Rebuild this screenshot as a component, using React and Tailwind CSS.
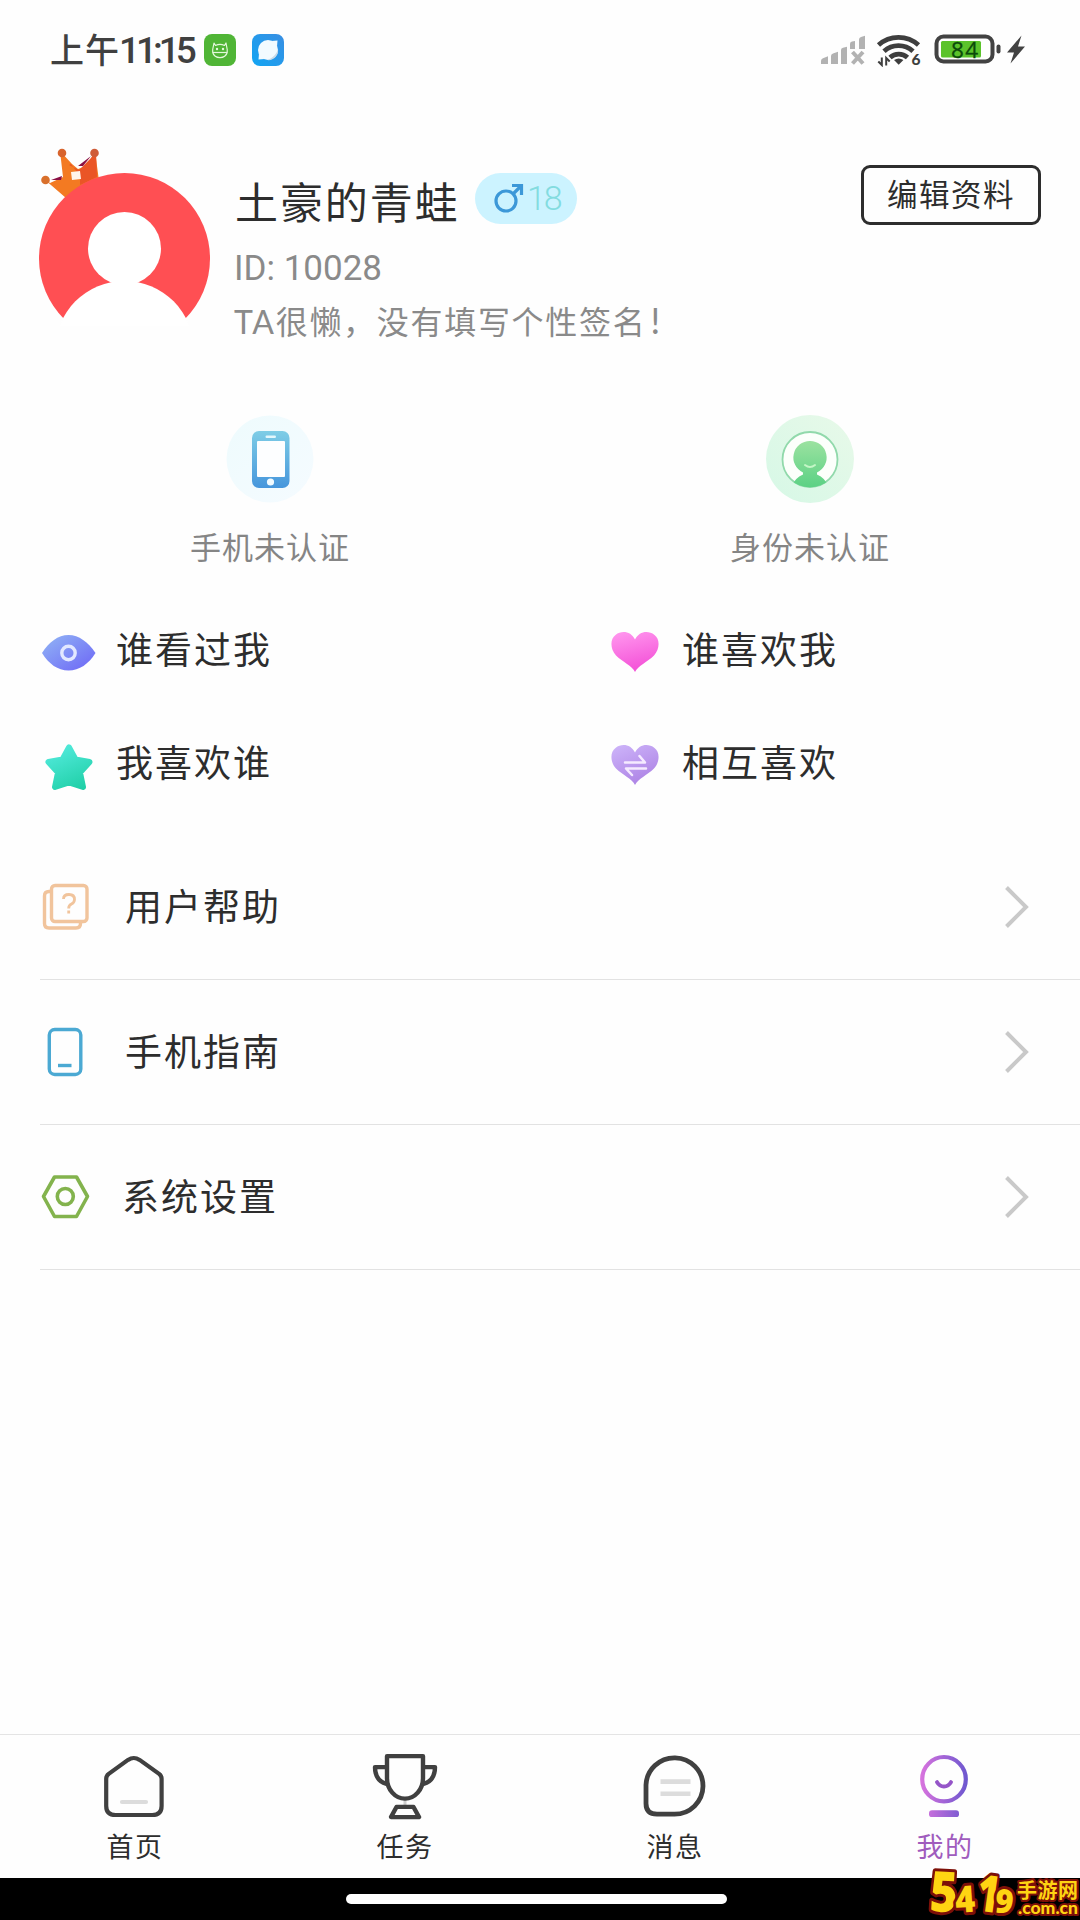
import React from "react";

const CJK = "font-['Noto_Sans_CJK_SC',sans-serif]";

function StatusBar() {
  return (
    <header className="flex h-[98px] items-center justify-between pl-[50px] pr-[51px]">
      <div className="flex items-center">
        <div className="flex w-[154px] items-center whitespace-nowrap font-medium text-[#404040]">
          <span className="text-[34px] leading-[40px] tracking-[1px]">上午</span>
          <span className="-ml-[1px] mt-[3px] font-['Roboto',sans-serif] text-[37px] leading-[40px] tracking-[-4px]">11:15</span>
        </div>
        <svg className="mt-[2px] h-8 w-8" viewBox="0 0 32 32">
          <rect width="32" height="32" rx="8" fill="#50b536" />
          <g fill="none" stroke="#e4f7dc" strokeWidth="1.2" strokeLinejoin="round">
            <path d="M10 9l1.5 2.5c2.5-1.2 6.500-1.200 9 0L22 9l1.200 6.500v3a7.500 6.800 0 0 1-14.500 0v-3z" />
            <path d="M9 18.500h14" />
          </g>
          <circle cx="13" cy="15" r="1.200" fill="#e4f7dc" />
          <circle cx="19" cy="15" r="1.200" fill="#e4f7dc" />
        </svg>
        <svg className="ml-4 mt-[2px] h-8 w-8" viewBox="0 0 32 32">
          <defs>
            <linearGradient id="planetBg" x1="0" y1="1" x2="1" y2="0">
              <stop offset="0" stopColor="#12a5f3" />
              <stop offset="1" stopColor="#398ee2" />
            </linearGradient>
          </defs>
          <rect width="32" height="32" rx="8" fill="url(#planetBg)" />
          <circle cx="16" cy="16" r="10" fill="#f2fbff" />
          <path d="M25.500 6.500l-.5 6-5.500-5.500zM6.500 25.500l.5-6 5.500 5.500z" fill="#f2fbff" />
          <path d="M26 15c-1.500 5.500-5 9-11 11 6 1 12-4 11-11z" fill="#c9dbe8" />
        </svg>
      </div>
      <div className="flex items-center">
        <svg className="h-[34px] w-[50px]" viewBox="818 32 50 34" fill="#b2b2b2">
          <path d="M821 64v-3q0-2 2-2.700l5-2V64zM831 64V56q0-2 2-2.600l5-1.600V64zM841 64V50q0-2 2-2.300l4-1V64zM850 49v-5q0-2 2-2.400l3-.6v8zM859 49V39.500q0-2 2-2.500l4-1.200V49z" />
          <path d="M852.500 52l10.500 11.500M863 52l-10.500 11.500" stroke="#b2b2b2" strokeWidth="4" />
        </svg>
        <svg className="ml-2 h-[36px] w-[48px]" viewBox="876 31.500 48 36">
          <g fill="none" stroke="#3e3e3e" strokeWidth="4.800">
            <path d="M878.500 45.500a30 30 0 0 1 40 0" />
            <path d="M884 51.800a21.500 21.500 0 0 1 29 0" />
            <path d="M890 58a13 13 0 0 1 17.500 0" />
          </g>
          <path d="M894 60.500q4.700-3 9.400 0l-4.700 4.700z" fill="#3e3e3e" />
          <path d="M881.800 58v7.500l-3.500-3.500M886.200 66v-7.500l3.500 3.500" fill="none" stroke="#3e3e3e" strokeWidth="2" />
          <text x="911.500" y="65.700" fontFamily="Lato" fontWeight="900" fontSize="15.500" fill="#3e3e3e">6</text>
        </svg>
        <svg className="ml-[9px] h-[34px] w-[96px]" viewBox="933 32.500 96 34">
          <rect x="936.500" y="37" width="56" height="25" rx="7" fill="#fff" stroke="#424242" strokeWidth="4" />
          <rect x="941" y="41.500" width="40" height="16.500" rx="1.500" fill="#5bc32b" />
          <text x="951" y="58" fontFamily="Open Sans" fontSize="22.500" fill="#0b4a0a" stroke="#0b4a0a" strokeWidth="0.300" textLength="27">84</text>
          <rect x="996.500" y="45" width="4" height="9" rx="2" fill="#424242" />
          <path d="M1021.500 36L1007 53h7l-3.500 11L1025 47h-7z" fill="#424242" />
        </svg>
      </div>
    </header>
  );
}

function Avatar() {
  return (
    <svg className="h-[182px] w-[180px] shrink-0" viewBox="36 144 180 182">
      <path d="M44 179l6 4 13-6-3-26 12 13 6 5 9-3 8-15 4 30-18 9-15 8z" fill="#f37a22" />
      <path d="M69 165l10 5 12-12 5-6 1 25-17 8v-9l-9-12z" fill="#ea5526" />
      <path d="M78 166l13-10-8 10zM51 180l11-4-1 4z" fill="#8b1044" />
      <path d="M71 172l9-1 1 8-9 1z" fill="#fff4ea" />
      <circle cx="45.500" cy="180" r="4.300" fill="#d9702b" />
      <circle cx="62" cy="153" r="4.300" fill="#d8642d" />
      <circle cx="94.500" cy="153" r="4.300" fill="#cf5b37" />
      <circle cx="124.500" cy="258.500" r="85.500" fill="#ff4f53" />
      <circle cx="124.500" cy="248.500" r="36.500" fill="#fff" />
      <circle cx="124.500" cy="350.500" r="69.500" fill="#fff" />
    </svg>
  );
}

function Profile() {
  return (
    <section className="flex h-[302px] items-start pl-9 pr-[39px] pt-[46px]">
      <Avatar />
      <div className="ml-[18px] flex flex-1 flex-col pt-[29px]">
        <div className="flex h-[52px] items-center">
          <h1 className="mt-[2px] w-[241px] whitespace-nowrap pl-[1px] text-[43px] leading-[60px] tracking-[1.900px] text-[#2d2d2d]">土豪的青蛙</h1>
          <div className="-mt-[2px] flex h-[51px] w-[102px] items-center rounded-full bg-[#ccf3ff] pl-[19px]">
            <svg className="h-[30px] w-[30px]" viewBox="0 0 30 30" fill="none" stroke="#3c98d8" strokeWidth="3.200">
              <circle cx="12" cy="18" r="10" />
              <path d="M19 11l8-8M18 2.500h9.500V12" />
            </svg>
            <span className="ml-[3px] font-['Roboto',sans-serif] text-[34px] font-light leading-[40px] tracking-[-2px] text-[#83dcdf]">18</span>
          </div>
        </div>
        <p className="mt-[21px] h-[46px] whitespace-nowrap font-['Roboto',sans-serif] text-[35px] leading-[46px] text-[#8a8a8a]">ID: 10028</p>
        <p className="mt-[5px] flex h-[46px] items-baseline whitespace-nowrap font-['Lato','Noto_Sans_CJK_SC',sans-serif] text-[32px] leading-[46px] tracking-[1.700px] text-[#8a8a8a]">
          TA很懒，没有填写个性签名<span className="ml-[4px] text-[36px]">!</span>
        </p>
      </div>
      <button className="mt-[21px] flex h-[60px] w-[180px] shrink-0 items-center justify-center whitespace-nowrap rounded-[9px] border-3 border-[#2d2d2d] pb-[4px] text-[30.500px] leading-[40px] tracking-[1.500px] text-[#2d2d2d]">编辑资料</button>
    </section>
  );
}

function PhoneBadge() {
  return (
    <svg className="h-[92px] w-[92px]" viewBox="224 413 92 92">
      <defs>
        <linearGradient id="phoneFill" x1="0" y1="0" x2="0" y2="1">
          <stop offset="0" stopColor="#7ecde6" />
          <stop offset="1" stopColor="#4696dc" />
        </linearGradient>
        <linearGradient id="phoneHalo" x1="0" y1="0" x2="1" y2="1">
          <stop offset="0" stopColor="#eefbfd" />
          <stop offset="1" stopColor="#f5fbff" />
        </linearGradient>
      </defs>
      <circle cx="270" cy="459" r="43.500" fill="url(#phoneHalo)" />
      <rect x="252" y="431" width="37.500" height="57" rx="7" fill="url(#phoneFill)" />
      <rect x="257" y="441" width="28" height="36" rx="1" fill="#fdfeff" />
      <rect x="265.500" y="435.500" width="10.500" height="2.500" rx="1.200" fill="#e3f7fc" />
      <circle cx="270.500" cy="482" r="3.600" fill="#f2fbff" />
    </svg>
  );
}

function IdentityBadge() {
  return (
    <svg className="h-[92px] w-[92px]" viewBox="763.500 413 92 92">
      <defs>
        <linearGradient id="idFill" x1="0" y1="0" x2="0" y2="1">
          <stop offset="0" stopColor="#9be2a0" />
          <stop offset="1" stopColor="#5bd184" />
        </linearGradient>
        <linearGradient id="idHalo" x1="0" y1="1" x2="1" y2="0">
          <stop offset="0" stopColor="#d6f8e6" />
          <stop offset="1" stopColor="#e8f9e9" />
        </linearGradient>
        <clipPath id="idClip"><circle cx="809.500" cy="459.500" r="28" /></clipPath>
      </defs>
      <circle cx="809.500" cy="459" r="44" fill="url(#idHalo)" />
      <circle cx="809.500" cy="459.500" r="27.500" fill="#fcfffb" stroke="#91d9ab" strokeWidth="1.800" />
      <g fill="url(#idFill)" clipPath="url(#idClip)">
        <path d="M809.500 441a16.500 16.500 0 0 1 7 31.500v2q8 3 12 13h-38q4-10 12-13v-2a16.500 16.500 0 0 1 7-31.500z" />
      </g>
      <path d="M804.500 465q5 4 10 0" fill="none" stroke="#c4f6c6" strokeWidth="2" strokeLinecap="round" />
    </svg>
  );
}

function Verifications() {
  const items = [
    { label: "手机未认证", icon: <PhoneBadge /> },
    { label: "身份未认证", icon: <IdentityBadge /> },
  ];
  return (
    <section className="grid h-[191px] grid-cols-2 pt-[13px]">
      {items.map((item) => (
        <div key={item.label} className="flex flex-col items-center">
          {item.icon}
          <span className="mt-[19px] whitespace-nowrap text-[31px] leading-[44px] tracking-[1px] text-[#858585]">{item.label}</span>
        </div>
      ))}
    </section>
  );
}

const heartPath =
  "M24 40C21 33.500 12 30.500 5 23.500C-1 17 -1 7 4.500 3C11 -2 20 -0.500 24 7.500C28 -0.500 37 -2 43.500 3C49 7 49 17 43 23.500C36 30.500 27 33.500 24 40z";

function EyeIcon() {
  return (
    <svg className="h-9 w-[54px]" viewBox="0 0 54 36">
      <defs>
        <linearGradient id="eyeFill" x1="0" y1="0" x2="1" y2="1">
          <stop offset="0.100" stopColor="#8eaef5" />
          <stop offset="0.850" stopColor="#7271f6" />
        </linearGradient>
      </defs>
      <path d="M0 18C7 7 16 0 26.500 0s19.500 7 27 18c-7 11-16 17.500-27 17.500S7 29 0 18z" fill="url(#eyeFill)" />
      <circle cx="26.500" cy="18" r="6.700" fill="none" stroke="#e2e8ff" strokeWidth="3.400" />
    </svg>
  );
}

function StarIcon() {
  return (
    <svg className="h-12 w-12" viewBox="0 0 48 48">
      <defs>
        <linearGradient id="starFill" gradientUnits="userSpaceOnUse" x1="12" y1="0" x2="34" y2="48">
          <stop offset="0" stopColor="#55ecdf" />
          <stop offset="1" stopColor="#1fcfa6" />
        </linearGradient>
      </defs>
      <path d="M24 4.500l6.500 12 14 2.500-9.500 10.500 3 14.500L24 39.500 10 44l3-14.500L3.500 19l14-2.500z" fill="url(#starFill)" stroke="url(#starFill)" strokeWidth="6" strokeLinejoin="round" />
    </svg>
  );
}

function HeartIcon() {
  return (
    <svg className="h-10 w-12" viewBox="0 0 48 40">
      <defs>
        <linearGradient id="heartFill" x1="0.300" y1="0" x2="0.600" y2="1">
          <stop offset="0" stopColor="#ff93ed" />
          <stop offset="1" stopColor="#f34ed6" />
        </linearGradient>
      </defs>
      <path d={heartPath} fill="url(#heartFill)" />
    </svg>
  );
}

function MutualIcon() {
  return (
    <svg className="h-10 w-12" viewBox="0 0 48 40">
      <defs>
        <linearGradient id="mutualFill" x1="0.200" y1="0" x2="0.700" y2="1">
          <stop offset="0" stopColor="#cbb1f8" />
          <stop offset="1" stopColor="#ac81e4" />
        </linearGradient>
      </defs>
      <path d={heartPath} fill="url(#mutualFill)" />
      <path d="M14 17.500h20L28.500 11M35 23.500H15l6 6.500" fill="none" stroke="#f5eaff" strokeWidth="2.500" strokeLinecap="round" strokeLinejoin="round" />
    </svg>
  );
}

function Relations() {
  const text = "whitespace-nowrap text-[37px] leading-[50px] tracking-[2px] text-[#2d2d2d]";
  return (
    <section className="grid h-[244px] grid-cols-[569px_1fr] grid-rows-[113px_113px] pl-[42px]">
      <div className="flex items-center">
        <div className="mt-[10px] w-[74px]"><EyeIcon /></div>
        <span className={text}>谁看过我</span>
      </div>
      <div className="flex items-center">
        <div className="mt-[9px] w-[71px]"><HeartIcon /></div>
        <span className={text}>谁喜欢我</span>
      </div>
      <div className="flex items-center">
        <div className="mt-[12px] w-[74px] pl-[3px]"><StarIcon /></div>
        <span className={text}>我喜欢谁</span>
      </div>
      <div className="flex items-center">
        <div className="mt-[9px] w-[71px]"><MutualIcon /></div>
        <span className={text}>相互喜欢</span>
      </div>
    </section>
  );
}

function HelpIcon() {
  return (
    <svg className="h-[50px] w-[50px]" viewBox="40 882 50 50" fill="none" stroke="#f1c49c" strokeWidth="3.400">
      <rect x="51.500" y="885.500" width="35.500" height="36" rx="3.500" />
      <path d="M51 891.500h-2q-4.500 0-4.500 4.500v27.500q0 4.500 4.500 4.500H76q4.500 0 4.500-4.500V922" />
      <path d="M63.500 899q0-4.500 5.500-4.500t5.500 5q0 3-3 4.500t-2.800 4.500M68.700 910.500v3" strokeWidth="2.800" />
    </svg>
  );
}

function GuideIcon() {
  return (
    <svg className="h-[50px] w-[50px]" viewBox="40 1027 50 50" fill="none" stroke="#4ba9d3" strokeWidth="3.400">
      <rect x="49.300" y="1029.500" width="31.500" height="45" rx="5.500" />
      <path d="M58 1065.500h13.500" />
    </svg>
  );
}

function SettingsIcon() {
  return (
    <svg className="h-[50px] w-[50px]" viewBox="40 1172 50 50" fill="none" stroke="#83b34d" strokeWidth="3.600" strokeLinejoin="round">
      <path d="M54.500 1177h22L87.500 1196.500l-11 20h-22L43.500 1196.500z" />
      <circle cx="65.300" cy="1196.500" r="8" />
    </svg>
  );
}

function Menu() {
  const items = [
    { label: "用户帮助", icon: <HelpIcon />, pad: "pl-[35px]" },
    { label: "手机指南", icon: <GuideIcon />, pad: "pl-[35px]" },
    { label: "系统设置", icon: <SettingsIcon />, pad: "pl-[32px]" },
  ];
  return (
    <nav className="pl-10">
      {items.map((item) => (
        <div key={item.label} className="flex h-[145px] items-center border-b-[1px] border-[#e2e2e2] pr-[50px]">
          {item.icon}
          <span className={`${item.pad} flex-1 whitespace-nowrap pb-[4px] text-[37px] leading-[50px] tracking-[2px] text-[#2d2d2d]`}>{item.label}</span>
          <svg className="h-[44px] w-[26px]" viewBox="0 0 26 44" fill="none" stroke="#c9c9c9" strokeWidth="4">
            <path d="M2.500 2.500L22 22 2.500 41.500" />
          </svg>
        </div>
      ))}
    </nav>
  );
}

const tabIconSize = "h-[68px] w-[70px]";

function HomeIcon() {
  return (
    <svg className={`${tabIconSize} -ml-[2px]`} preserveAspectRatio="none" viewBox="99 1753 70 70" fill="none" stroke="#404040" strokeWidth="4.200">
      <path d="M128 1761.200q5.800-4 11.600 0l19.500 14.300q2.500 2 2.500 5v28q0 9.300-9.300 9.300h-36.800q-9.300 0-9.300-9.300v-28q0-3 2.500-5z" strokeLinejoin="round" />
      <path d="M122 1804.500h24" stroke="#dcdcdc" strokeLinecap="round" />
    </svg>
  );
}

function TrophyIcon() {
  return (
    <svg className={`${tabIconSize} -ml-[1px]`} preserveAspectRatio="none" viewBox="369.500 1753 70 70" fill="none" stroke="#404040" strokeWidth="4.400" strokeLinejoin="round">
      <path d="M404.500 1800v8" stroke="#cfcfcf" strokeWidth="3" />
      <path d="M386.500 1757.300h36V1780a18 21 0 0 1-36 0zM386.500 1768.500H374.500q0 14 11.500 17.500M422.500 1768.500H434.500q0 14-11.500 17.500M396 1809.500h17l5.500 10.500h-28z" />
    </svg>
  );
}

function MessageIcon() {
  return (
    <svg className={`${tabIconSize} -ml-[1px]`} preserveAspectRatio="none" viewBox="639.500 1753.500 70 70" fill="none" stroke="#404040" strokeWidth="4.800">
      <path d="M645.500 1787.500a28.500 29 0 1 1 28.500 30h-17.500q-11 0-11-11z" />
      <path d="M660 1784h30M660 1796.500h30" stroke="#dcdcdc" />
    </svg>
  );
}

function MeIcon() {
  return (
    <svg className={`${tabIconSize} -ml-[2px]`} preserveAspectRatio="none" viewBox="909.500 1753 70 70" fill="none">
      <defs>
        <linearGradient id="meFill" gradientUnits="userSpaceOnUse" x1="921" y1="0" x2="968" y2="0">
          <stop offset="0" stopColor="#d973de" />
          <stop offset="1" stopColor="#6c57cf" />
        </linearGradient>
      </defs>
      <ellipse cx="944.500" cy="1781" rx="21.800" ry="22.800" stroke="url(#meFill)" strokeWidth="4.200" />
      <path d="M937.500 1784q2.500 4.500 7 4.500t7-4.500" stroke="#9555c8" strokeWidth="4" strokeLinecap="round" />
      <rect x="929.500" y="1813" width="30" height="7" rx="3" fill="url(#meFill)" />
    </svg>
  );
}

function TabBar() {
  const tabs = [
    { label: "首页", icon: <HomeIcon />, color: "text-[#2d2d2d]" },
    { label: "任务", icon: <TrophyIcon />, color: "text-[#2d2d2d]" },
    { label: "消息", icon: <MessageIcon />, color: "text-[#2d2d2d]" },
    { label: "我的", icon: <MeIcon />, color: "text-[#a05cbd]" },
  ];
  return (
    <footer className="mt-auto">
      <div className="grid h-[144px] grid-cols-4 border-t border-[#e4e4e4] pt-[17px]">
        {tabs.map((tab) => (
          <div key={tab.label} className="flex flex-col items-center">
            {tab.icon}
            <span className={`${tab.color} mt-[7px] whitespace-nowrap text-[27px] leading-[38px] tracking-[1.500px]`}>{tab.label}</span>
          </div>
        ))}
      </div>
      <div className="flex h-[42px] justify-center bg-black pt-[16px]">
        <div className="ml-[-7px] h-[10px] w-[381px] rounded-full bg-white" />
      </div>
    </footer>
  );
}

function SiteBadge() {
  return (
    <svg className="absolute bottom-0 right-0 h-[60px] w-[154px]" viewBox="926 1860 154 60" fill="#ffd412" stroke="#7d1008" strokeLinejoin="round" paintOrder="stroke" fontFamily="'Open Sans', sans-serif" fontWeight="800">
      <g strokeWidth="6">
        <text transform="translate(929 1911) rotate(3) scale(0.850 1)" fontSize="56">5</text>
        <text transform="translate(956 1913) rotate(-4) scale(0.920 1)" fontSize="37">4</text>
        <text transform="translate(975 1910) rotate(8) scale(0.750 1)" fontSize="51">1</text>
        <text transform="translate(994 1912) rotate(6) scale(0.950 1)" fontSize="33">9</text>
      </g>
      <g strokeWidth="4">
        <text x="1017" y="1898" fontFamily="'Noto Sans CJK SC', sans-serif" fontWeight="700" fontSize="20" textLength="61">手游网</text>
        <text x="1018" y="1914" fontFamily="Lato, sans-serif" fontWeight="900" fontSize="17" textLength="60" lengthAdjust="spacingAndGlyphs">.com.cn</text>
      </g>
    </svg>
  );
}

export default function App() {
  return (
    <main className={`${CJK} relative flex h-[1920px] w-[1080px] flex-col overflow-hidden bg-[#fefefe]`}>
      <StatusBar />
      <Profile />
      <Verifications />
      <Relations />
      <Menu />
      <TabBar />
      <SiteBadge />
    </main>
  );
}
